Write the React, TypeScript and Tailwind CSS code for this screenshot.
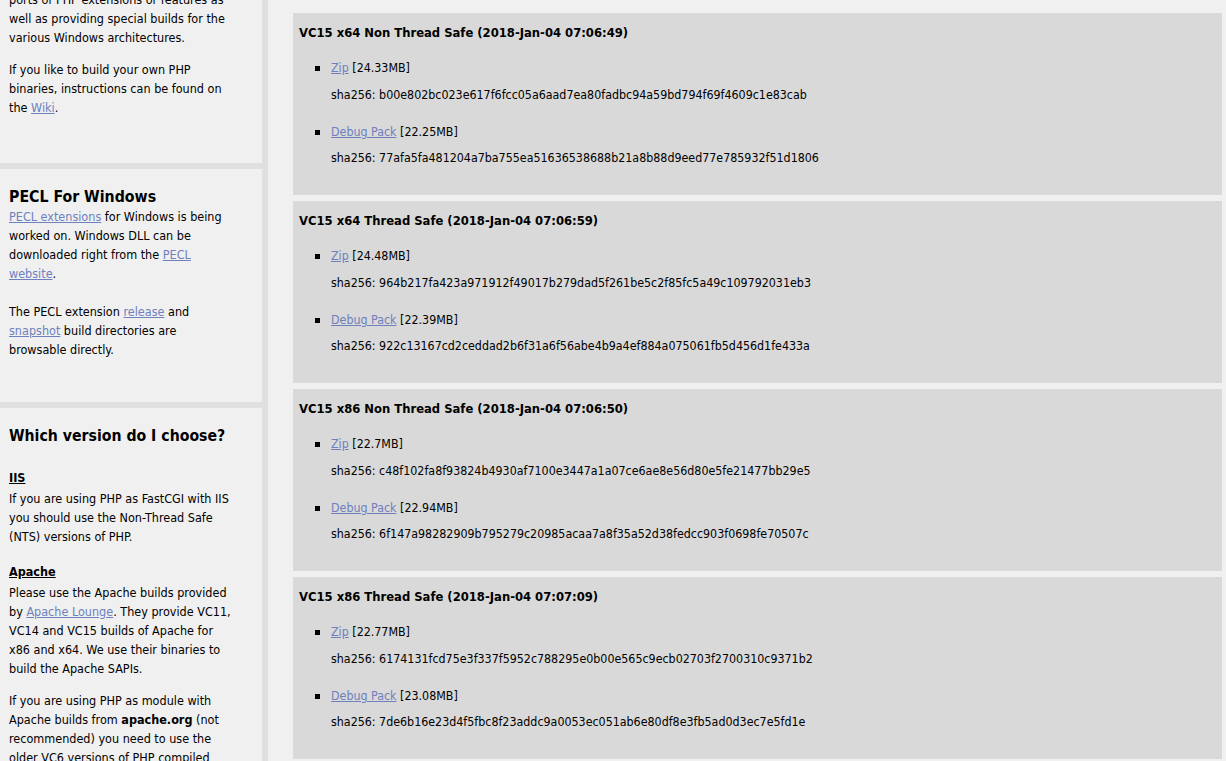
import React from 'react';

const builds = [
  {
    title: 'VC15 x64 Non Thread Safe (2018-Jan-04 07:06:49)',
    zip: '24.33MB',
    zipSha: 'b00e802bc023e617f6fcc05a6aad7ea80fadbc94a59bd794f69f4609c1e83cab',
    debug: '22.25MB',
    debugSha: '77afa5fa481204a7ba755ea51636538688b21a8b88d9eed77e785932f51d1806',
  },
  {
    title: 'VC15 x64 Thread Safe (2018-Jan-04 07:06:59)',
    zip: '24.48MB',
    zipSha: '964b217fa423a971912f49017b279dad5f261be5c2f85fc5a49c109792031eb3',
    debug: '22.39MB',
    debugSha: '922c13167cd2ceddad2b6f31a6f56abe4b9a4ef884a075061fb5d456d1fe433a',
  },
  {
    title: 'VC15 x86 Non Thread Safe (2018-Jan-04 07:06:50)',
    zip: '22.7MB',
    zipSha: 'c48f102fa8f93824b4930af7100e3447a1a07ce6ae8e56d80e5fe21477bb29e5',
    debug: '22.94MB',
    debugSha: '6f147a98282909b795279c20985acaa7a8f35a52d38fedcc903f0698fe70507c',
  },
  {
    title: 'VC15 x86 Thread Safe (2018-Jan-04 07:07:09)',
    zip: '22.77MB',
    zipSha: '6174131fcd75e3f337f5952c788295e0b00e565c9ecb02703f2700310c9371b2',
    debug: '23.08MB',
    debugSha: '7de6b16e23d4f5fbc8f23addc9a0053ec051ab6e80df8e3fb5ad0d3ec7e5fd1e',
  },
];

const A = ({ children }: { children: React.ReactNode }) => (
  <a href="#" className="text-[#6e80bd] underline">
    {children}
  </a>
);

const Build = ({ b }: { b: (typeof builds)[number] }) => (
  <div className="bg-[#d9d9d9] h-[182px] pl-[6px] pt-[11px] text-[12.35px]">
    <h4 className="font-bold text-[12.9px] leading-[18px] whitespace-nowrap">{b.title}</h4>
    <ul className="mt-[17px]">
      <li>
        <div className="flex items-center pl-[16px] leading-[18px]">
          <span className="w-[5px] h-[5px] bg-black mr-[11px]" />
          <A>Zip</A>&nbsp;[{b.zip}]
        </div>
        <p className="pl-[32px] mt-[9px] leading-[18px]">sha256: {b.zipSha}</p>
      </li>
      <li className="mt-[19px]">
        <div className="flex items-center pl-[16px] leading-[18px]">
          <span className="w-[5px] h-[5px] bg-black mr-[11px]" />
          <A>Debug Pack</A>&nbsp;[{b.debug}]
        </div>
        <p className="pl-[32px] mt-[8px] leading-[18px]">sha256: {b.debugSha}</p>
      </li>
    </ul>
  </div>
);

export default function App() {
  return (
    <div className="h-[761px] overflow-hidden flex bg-[#f0f0f0] text-black text-[12.5px] font-['Tahoma','DejaVu_Sans_Condensed','DejaVu_Sans',sans-serif]">
      <aside className="w-[262px] shrink-0 flex flex-col gap-[6px] bg-[#e0e0e0] leading-[19px] whitespace-nowrap">
        <div className="bg-[#f0f0f0] h-[173px] shrink-0 px-[9px] -mt-[10px]">
          <p>
            ports of PHP extensions or features as<br />
            well as providing special builds for the<br />
            various Windows architectures.
          </p>
          <p className="mt-[13px]">
            If you like to build your own PHP<br />
            binaries, instructions can be found on<br />
            the <A>Wiki</A>.
          </p>
        </div>
        <div className="bg-[#f0f0f0] h-[233px] shrink-0 px-[9px] pt-[18px]">
          <h3 className="font-bold text-[15.75px] leading-[20px]">PECL For Windows</h3>
          <p>
            <A>PECL extensions</A> for Windows is being<br />
            worked on. Windows DLL can be<br />
            downloaded right from the <A>PECL</A><br />
            <A>website</A>.
          </p>
          <p className="mt-[19px]">
            The PECL extension <A>release</A> and<br />
            <A>snapshot</A> build directories are<br />
            browsable directly.
          </p>
        </div>
        <div className="bg-[#f0f0f0] flex-1 px-[9px] pt-[16px]">
          <h2 className="font-bold text-[15.7px] leading-[24px]">Which version do I choose?</h2>
          <h4 className="font-bold underline mt-[19px] leading-[22px]">IIS</h4>
          <p>
            If you are using PHP as FastCGI with IIS<br />
            you should use the Non-Thread Safe<br />
            (NTS) versions of PHP.
          </p>
          <h4 className="font-bold underline mt-[15px] leading-[22px]">Apache</h4>
          <p>
            Please use the Apache builds provided<br />
            by <A>Apache Lounge</A>. They provide VC11,<br />
            VC14 and VC15 builds of Apache for<br />
            x86 and x64. We use their binaries to<br />
            build the Apache SAPIs.
          </p>
          <p className="mt-[13px]">
            If you are using PHP as module with<br />
            Apache builds from <b>apache.org</b> (not<br />
            recommended) you need to use the<br />
            older VC6 versions of PHP compiled
          </p>
        </div>
      </aside>
      <div className="w-[6px] shrink-0 bg-[#e0e0e0]" />
      <main className="flex-1 pl-[25px] pr-[4px] pt-[13px] flex flex-col gap-[6px]">
        {builds.map((b) => (
          <Build key={b.title} b={b} />
        ))}
      </main>
    </div>
  );
}
